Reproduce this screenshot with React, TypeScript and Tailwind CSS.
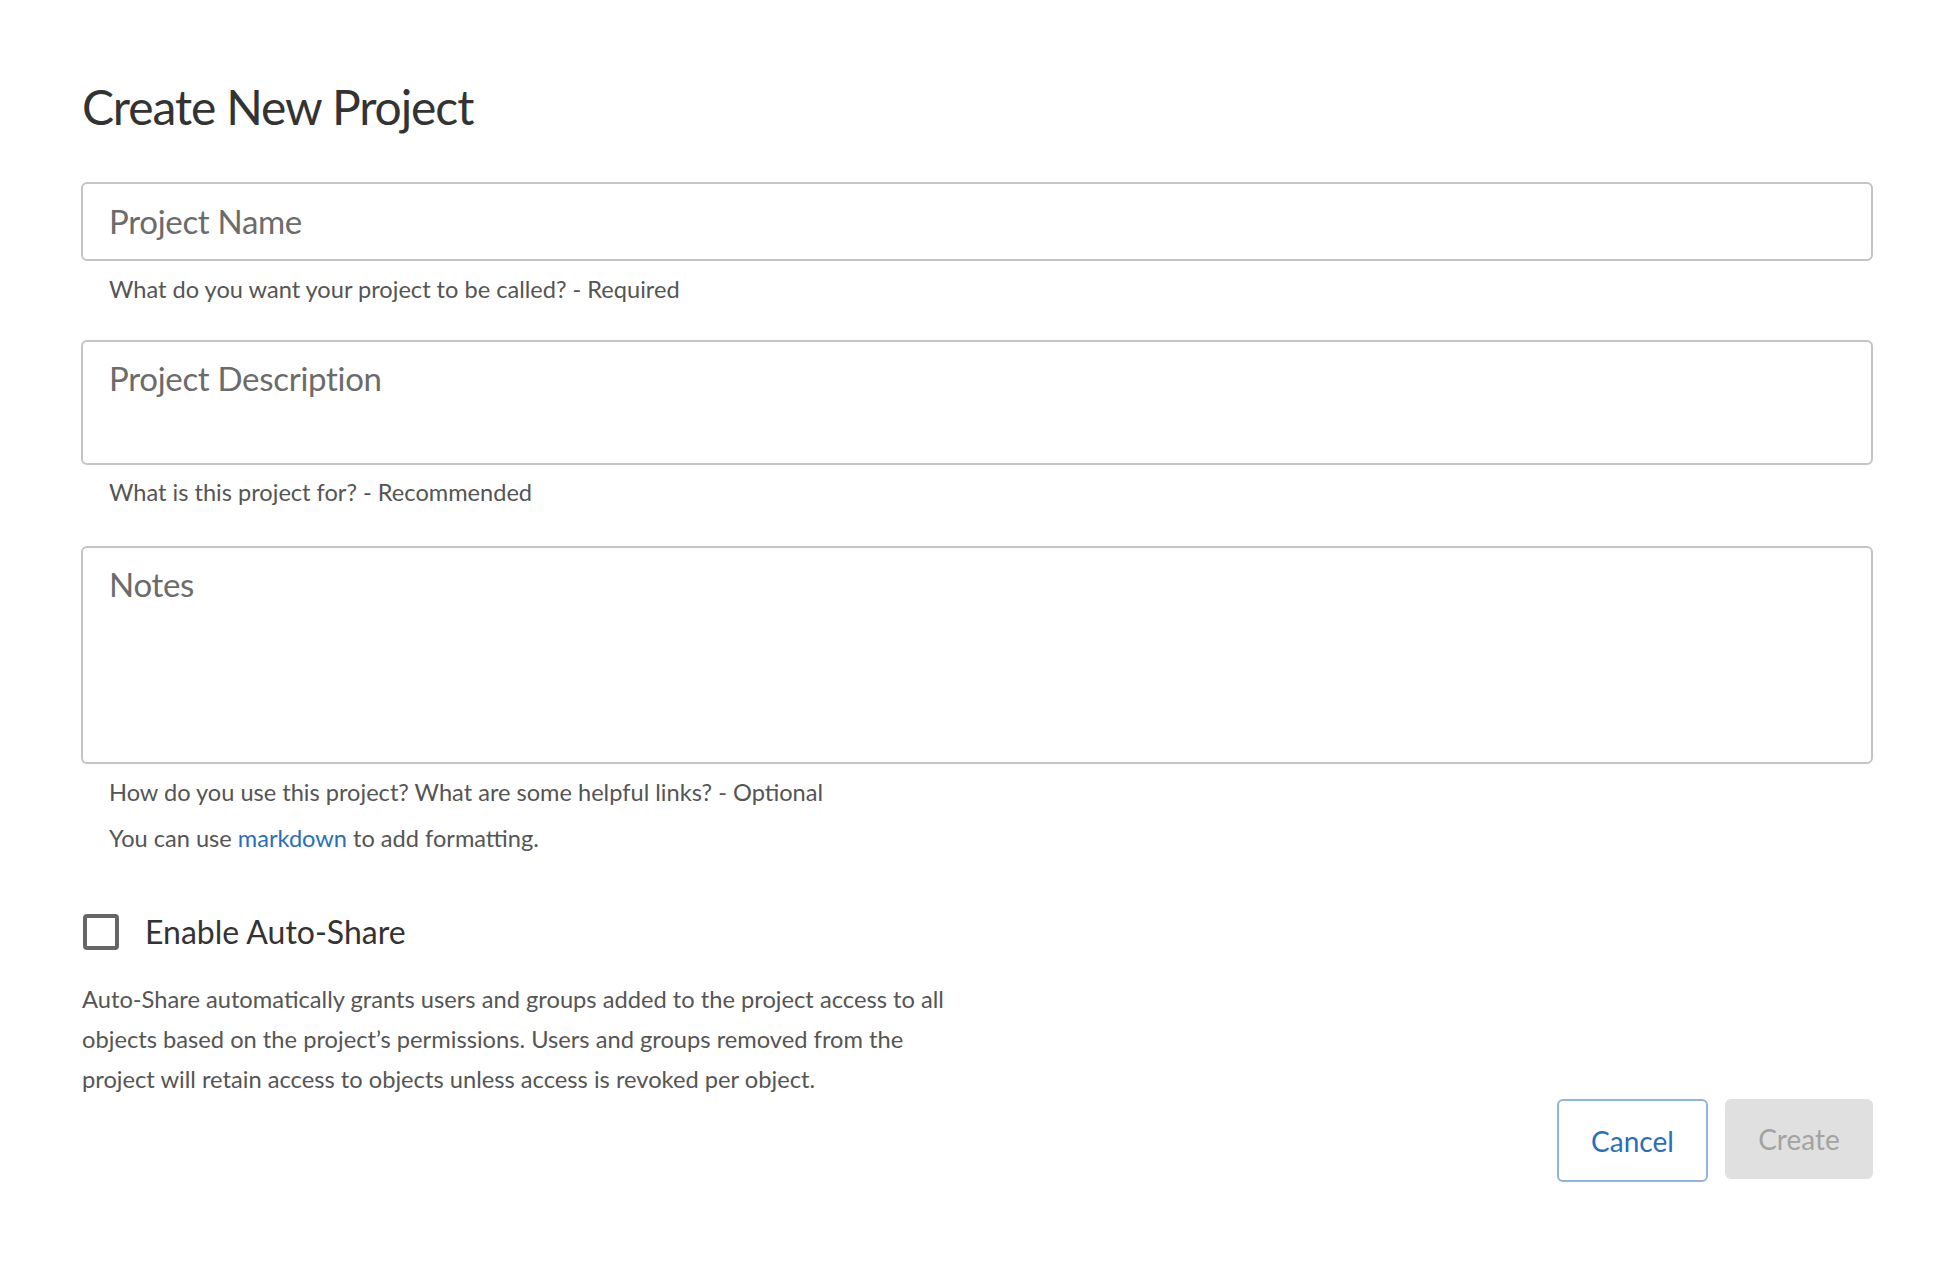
import React from "react";

export default function App() {
  return (
    <div className="min-h-screen bg-white font-['Lato','Noto_Sans',sans-serif] text-[#333]">
      <div className="pl-[81px] pr-[73px] pt-[78px]">
        <h1 className="pl-[1px] text-[48px] leading-[1.2] font-normal tracking-[-1.1px] text-[#333]">Create New Project</h1>

        <div className="mt-[46px]">
          <input
            type="text"
            placeholder="Project Name"
            className="block w-full h-[79px] rounded-[6px] border-2 border-[#c4c4c4] px-[26px] text-[33px] leading-[1.2] tracking-[-0.3px] text-[#333] placeholder:text-[#6b6b6b] outline-none"
          />
          <p className="mt-[14px] pl-[28px] text-[23.6px] leading-[1.2] text-[#555]">
            What do you want your project to be called? - Required
          </p>
        </div>

        <div className="mt-[37px]">
          <textarea
            placeholder="Project Description"
            className="block w-full h-[125px] resize-none rounded-[6px] border-2 border-[#c4c4c4] px-[26px] pt-[17px] text-[33px] leading-[1.2] tracking-[-0.3px] text-[#333] placeholder:text-[#6b6b6b] outline-none"
          />
          <p className="mt-[13px] pl-[28px] text-[23.6px] leading-[1.2] text-[#555]">
            What is this project for? - Recommended
          </p>
        </div>

        <div className="mt-[40px]">
          <textarea
            placeholder="Notes"
            className="block w-full h-[218px] resize-none rounded-[6px] border-2 border-[#c4c4c4] px-[26px] pt-[17px] text-[33px] leading-[1.2] tracking-[-0.3px] text-[#333] placeholder:text-[#6b6b6b] outline-none"
          />
          <p className="mt-[14px] pl-[28px] text-[23.6px] leading-[1.2] text-[#555]">
            How do you use this project? What are some helpful links? - Optional
          </p>
          <p className="mt-[17px] pl-[28px] text-[23.6px] leading-[1.2] text-[#555]">
            You can use <a href="#" className="text-[#2a6ebb]">markdown</a> to add formatting.
          </p>
        </div>

        <label className="mt-[61px] flex items-center gap-[26px] cursor-pointer">
          <span className="block w-[36px] h-[36px] ml-[2px] shrink-0 rounded-[4px] border-[4px] border-[#666] bg-white"></span>
          <span className="text-[32px] leading-[1.2] text-[#333]">Enable Auto-Share</span>
        </label>

        <p className="mt-[28px] pl-[1px] max-w-[900px] text-[23.7px] leading-[40px] text-[#555]">
          Auto-Share automatically grants users and groups added to the project access to all objects based on the project’s permissions. Users and groups removed from the project will retain access to objects unless access is revoked per object.
        </p>

        <div className="flex justify-end items-start gap-[17px]">
          <button className="w-[151px] h-[83px] rounded-[6px] border-2 border-[#8fb4de] bg-white text-[28px] text-[#2a6ebb]">
            Cancel
          </button>
          <button disabled className="w-[148px] h-[80px] rounded-[6px] bg-[#e0e0e0] text-[28px] text-[#a3a3a3]">
            Create
          </button>
        </div>
      </div>
    </div>
  );
}
